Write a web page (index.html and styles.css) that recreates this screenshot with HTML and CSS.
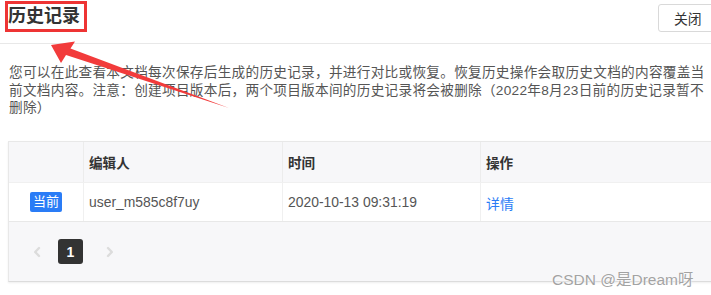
FILE: index.html
```html
<!DOCTYPE html>
<html lang="zh">
<head>
<meta charset="utf-8">
<title>历史记录</title>
<link rel="stylesheet" href="styles.css">
</head>
<body>
<div class="page">
  <div class="header">
    <h1 class="title">历史记录</h1>
    <button class="close-btn">关闭</button>
  </div>
  <p class="desc">您可以在此查看本文档每次保存后生成的历史记录，并进行对比或恢复。恢复历史操作会取历史文档的内容覆盖当前文档内容。注意：创建项目版本后，两个项目版本间的历史记录将会被删除（2022年8月23日前的历史记录暂不删除）</p>
  <div class="table">
    <div class="row head">
      <div class="cell c1"></div>
      <div class="cell c2">编辑人</div>
      <div class="cell c3">时间</div>
      <div class="cell c4">操作</div>
    </div>
    <div class="row body">
      <div class="cell c1 center"><span class="badge">当前</span></div>
      <div class="cell c2">user_m585c8f7uy</div>
      <div class="cell c3">2020-10-13 09:31:19</div>
      <div class="cell c4"><a class="link">详情</a></div>
    </div>
    <div class="pager">
      <span class="arrow prev"><svg width="8" height="12" viewBox="0 0 8 12"><path d="M6 2 L2.2 6 L6 10" fill="none" stroke="#dcdcdc" stroke-width="2.4" stroke-linecap="round" stroke-linejoin="round"/></svg></span>
      <span class="page-num">1</span>
      <span class="arrow next"><svg width="8" height="12" viewBox="0 0 8 12"><path d="M2 2 L5.8 6 L2 10" fill="none" stroke="#dcdcdc" stroke-width="2.4" stroke-linecap="round" stroke-linejoin="round"/></svg></span>
    </div>
  </div>
  <svg class="annot-arrow" width="711" height="295" viewBox="0 0 711 295">
    <polygon points="51,45 75,41.5 70.5,48.5 229,108 66,55 61,63" fill="#f23b3b"/>
  </svg>
  <div class="watermark">CSDN @是Dream呀</div>
</div>
</body>
</html>
```
FILE: styles.css
```css
html, body {
  margin: 0;
  padding: 0;
  background: #fff;
}
.page {
  position: relative;
  width: 711px;
  height: 295px;
  overflow: hidden;
  font-family: "Liberation Sans", "Noto Sans CJK SC", sans-serif;
  color: #555;
}
.header {
  height: 43px;
  border-bottom: 1px solid #e8e8e8;
  display: flex;
  justify-content: space-between;
  align-items: flex-start;
  box-sizing: content-box;
}
.title {
  margin: 1px 0 0 5px;
  padding: 0 4px 0 0;
  border: 3px solid #ee3434;
  font-size: 18px;
  line-height: 25px;
  font-weight: 700;
  color: #333;
}
.close-btn {
  margin: 4px -12px 0 0;
  width: 65px;
  height: 28px;
  padding: 0 0 0 15px;
  text-align: left;
  background: #fff;
  border: 1px solid #d9d9d9;
  border-radius: 3px;
  font-family: "Liberation Sans", "Noto Sans CJK SC", sans-serif;
  font-size: 13.8px;
  color: #333;
}
.desc {
  margin: 20px 0 0 0;
  padding: 0 0 0 9px;
  font-size: 13.65px;
  letter-spacing: 0.27px;
  line-height: 17.7px;
  color: #555;
}
.table {
  margin: 24px 0 0 8px;
  width: 712px;
  border: 1px solid #e8e8e8;
  border-bottom: 1px solid #dcdcdc;
  box-shadow: 0 1px 2px rgba(0,0,0,0.07);
}
.row {
  display: grid;
  grid-template-columns: 74px 199px 198px 1fr;
}
.row.head {
  height: 40px;
  background: #f7f7f9;
  color: #333;
  font-weight: 600;
  font-size: 13.6px;
}
.row.body {
  height: 38px;
  background: #fff;
  border-top: 1px solid #f0f0f0;
  border-bottom: 1px solid #e8e8e8;
  font-size: 13.9px;
}
.cell {
  display: flex;
  align-items: center;
  padding-left: 5px;
  border-left: 1px solid #ececec;
}
.cell.c1 {
  border-left: none;
  padding-left: 0;
}
.center {
  justify-content: center;
}
.row.body .cell {
  border-left-color: #f0f0f0;
}
.badge {
  display: inline-block;
  background: #2a7cf6;
  color: #fff;
  font-size: 13px;
  line-height: 20px;
  padding: 0 3px;
  border-radius: 2px;
}
.link {
  color: #2a7cf6;
  margin-top: 2px;
}
.pager {
  height: 59px;
  background: #f7f7f9;
  display: flex;
  align-items: center;
  padding-left: 24px;
}
.arrow {
  display: flex;
  align-items: center;
}
.arrow.prev {
  margin-right: 17px;
}
.arrow.next {
  margin-left: 23px;
}
.page-num {
  width: 25px;
  height: 25px;
  background: #333;
  color: #fff;
  border-radius: 3px;
  font-weight: 700;
  font-size: 14px;
  display: flex;
  align-items: center;
  justify-content: center;
}
.annot-arrow {
  position: absolute;
  left: 0;
  top: 0;
  pointer-events: none;
}
.watermark {
  position: absolute;
  left: 552px;
  top: 267px;
  font-size: 15.5px;
  color: #a3a3a3;
  text-shadow: 0 0 2px #fff, 0 0 1px #fff;
  white-space: nowrap;
}
```
